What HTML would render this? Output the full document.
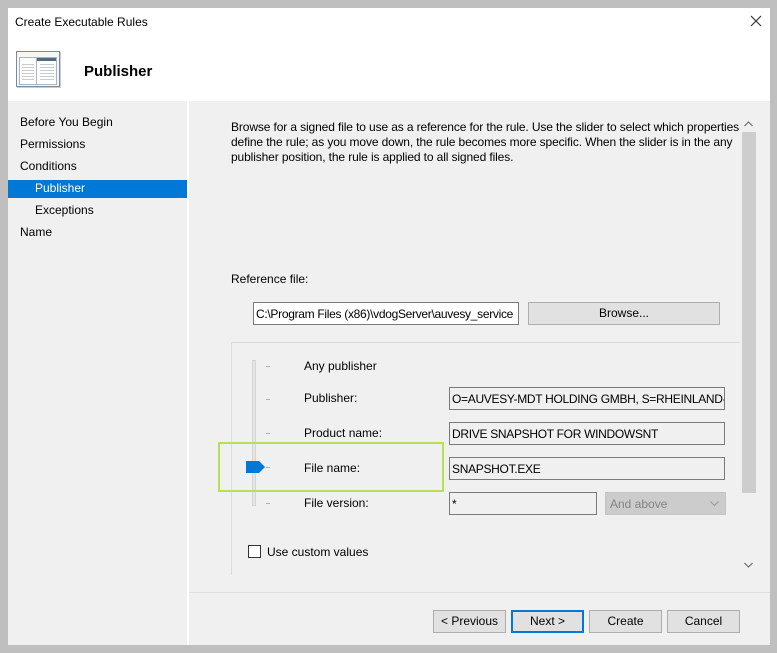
<!DOCTYPE html>
<html><head><style>
*{box-sizing:border-box;margin:0;padding:0}
body{width:777px;height:653px;background:#bfbfbf;font-family:"Liberation Sans",sans-serif;font-size:12px;color:#000;position:relative;overflow:hidden}
.a{position:absolute}
.win{left:8px;top:8px;width:762px;height:637px;background:#fff}
.tb{border:1px solid #7a7a7a;background:#f0f0f0;height:23px;padding:4px 2px;white-space:nowrap;overflow:hidden;font-size:12px;letter-spacing:-0.3px}
.btn{border:1px solid #adadad;background:#e1e1e1;height:23px;text-align:center;line-height:21px}
.tick{width:4px;height:1px;background:#b0b0b0}
.lbl{font-size:12px}
.p div{white-space:nowrap;letter-spacing:-0.12px}
</style></head><body>
<div class="a win"></div>
<div class="a" style="left:15px;top:15px;font-size:12px">Create Executable Rules</div>
<svg class="a" style="left:750px;top:15px" width="12" height="12"><path d="M1 1L11 11M11 1L1 11" stroke="#333" stroke-width="1.2"/></svg>
<!-- icon -->
<div class="a" style="left:16px;top:51px;width:44px;height:36px;border:1px solid #7c8b9a;background:#f4f6f8;box-shadow:1px 1px 0 #ccc">
 <div class="a" style="left:2px;top:5px;width:38px;height:28px;border:1px solid #a9b4bf;background:#fff"></div>
 <div class="a" style="left:20px;top:6px;width:19px;height:3px;background:#4d6a86"></div>
 <div class="a" style="left:19px;top:6px;width:1px;height:26px;background:#a9b4bf"></div>
 <div class="a" style="left:5px;top:12px;width:12px;height:16px;background:repeating-linear-gradient(#c5ccd3 0 1px,transparent 1px 3px)"></div>
 <div class="a" style="left:23px;top:12px;width:14px;height:16px;background:repeating-linear-gradient(#c5ccd3 0 1px,transparent 1px 3px)"></div>
</div>
<div class="a" style="left:84px;top:63px;font-size:15px;font-weight:bold">Publisher</div>
<!-- left nav -->
<div class="a" style="left:8px;top:101px;width:179px;height:544px;background:#f0f0f0"></div>
<div class="a" style="left:189px;top:101px;width:581px;height:544px;background:#f0f0f0"></div>
<div class="a" style="left:20px;top:115px">Before You Begin</div>
<div class="a" style="left:20px;top:137px">Permissions</div>
<div class="a" style="left:20px;top:159px">Conditions</div>
<div class="a" style="left:8px;top:180px;width:179px;height:18px;background:#0078d7"></div>
<div class="a" style="left:35px;top:181px;color:#fff">Publisher</div>
<div class="a" style="left:35px;top:203px">Exceptions</div>
<div class="a" style="left:20px;top:225px">Name</div>
<!-- content -->
<div class="a p" style="left:231px;top:120px;width:510px;line-height:15px;overflow:hidden">
<div>Browse for a signed file to use as a reference for the rule. Use the slider to select which properties</div>
<div>define the rule; as you move down, the rule becomes more specific. When the slider is in the any</div>
<div>publisher position, the rule is applied to all signed files.</div></div>
<div class="a" style="left:231px;top:272px">Reference file:</div>
<div class="a tb" style="left:253px;top:302px;width:266px;background:#fff">C:\Program Files (x86)\vdogServer\auvesy_service</div>
<div class="a btn" style="left:528px;top:302px;width:192px">Browse...</div>
<div class="a" style="left:231px;top:342px;width:509px;height:1px;background:#dcdcdc"></div>
<div class="a" style="left:231px;top:342px;width:1px;height:233px;background:#dcdcdc"></div>
<!-- slider -->
<div class="a" style="left:252px;top:360px;width:4px;height:146px;background:#e4e4e4;border:1px solid #d6d6d6"></div>
<div class="a tick" style="left:266px;top:366px"></div>
<div class="a tick" style="left:266px;top:399px"></div>
<div class="a tick" style="left:266px;top:433px"></div>
<div class="a tick" style="left:266px;top:467px"></div>
<div class="a tick" style="left:266px;top:503px"></div>
<svg class="a" style="left:246px;top:461px" width="20" height="12"><path d="M0 0H13L19 6L13 12H0Z" fill="#0078d7"/></svg>
<div class="a lbl" style="left:304px;top:359px">Any publisher</div>
<div class="a lbl" style="left:304px;top:391px">Publisher:</div>
<div class="a lbl" style="left:304px;top:426px">Product name:</div>
<div class="a lbl" style="left:304px;top:461px">File name:</div>
<div class="a lbl" style="left:304px;top:496px">File version:</div>
<div class="a tb" style="left:449px;top:387px;width:276px">O=AUVESY-MDT HOLDING GMBH, S=RHEINLAND-</div>
<div class="a tb" style="left:449px;top:422px;width:276px">DRIVE SNAPSHOT FOR WINDOWSNT</div>
<div class="a tb" style="left:449px;top:457px;width:276px">SNAPSHOT.EXE</div>
<div class="a tb" style="left:449px;top:492px;width:148px">*</div>
<div class="a" style="left:605px;top:492px;width:121px;height:23px;background:#ccc;border:1px solid #c4c4c4;color:#838383;padding:4px 4px">And above<svg style="position:absolute;right:6px;top:8px" width="9" height="6"><path d="M0.5 0.5L4.5 4.5L8.5 0.5" stroke="#999" fill="none"/></svg></div>
<div class="a" style="left:218px;top:442px;width:226px;height:50px;border:2px solid #b5e24e"></div>
<div class="a" style="left:248px;top:545px;width:13px;height:13px;border:1px solid #333;background:#fff"></div>
<div class="a" style="left:267px;top:545px">Use custom values</div>
<!-- scrollbar -->
<div class="a" style="left:741px;top:118px;width:15px;height:457px;background:#f0f0f0"></div>
<div class="a" style="left:742px;top:132px;width:14px;height:361px;background:#cdcdcd"></div>
<svg class="a" style="left:744px;top:121px" width="9" height="6"><path d="M0.5 5L4.5 1L8.5 5" stroke="#606060" fill="none"/></svg>
<svg class="a" style="left:744px;top:562px" width="9" height="6"><path d="M0.5 1L4.5 5L8.5 1" stroke="#606060" fill="none"/></svg>
<div class="a" style="left:189px;top:592px;width:581px;height:1px;background:#dfdfdf"></div>
<!-- buttons -->
<div class="a btn" style="left:433px;top:610px;width:73px">&lt; Previous</div>
<div class="a btn" style="left:511px;top:610px;width:73px;border:2px solid #0078d7;line-height:19px">Next &gt;</div>
<div class="a btn" style="left:589px;top:610px;width:73px">Create</div>
<div class="a btn" style="left:667px;top:610px;width:73px">Cancel</div>
</body></html>
